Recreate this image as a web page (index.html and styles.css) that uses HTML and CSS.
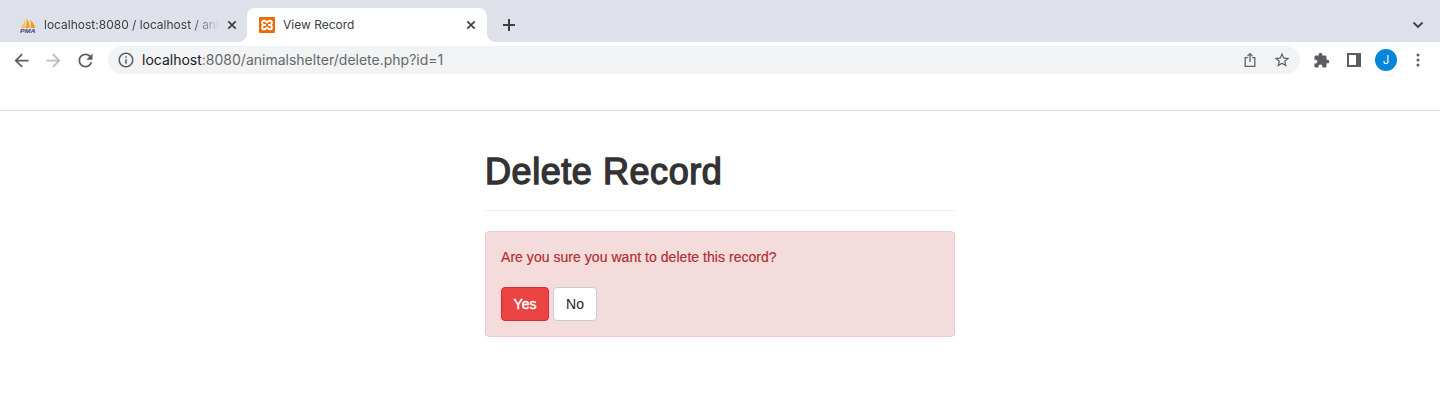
FILE: index.html
```html
<!DOCTYPE html>
<html lang="en">
<head>
<meta charset="utf-8">
<title>View Record</title>
<link rel="stylesheet" href="styles.css">
</head>
<body>
<header class="browser">
  <div class="tab-strip">
    <div class="tab tab-back">
      <svg class="favicon" viewBox="0 0 16 16">
        <path d="M5.3 1.5V11H.8C2.6 8.500 4.500 5 5.300 1.500z" fill="#fbbd69"/>
        <path d="M6.500 1C8.800 4 9.700 8 9.600 11H5.600C6.600 8 7 4 6.500 1z" fill="#f89c0e"/>
        <path d="M10.300 2.500C13 5.500 14.800 8.500 15.200 11H10.500C11.200 8.500 11.100 5 10.300 2.500z" fill="#f89c0e"/>
        <text x="0" y="15.500" class="pma" textLength="15.500" lengthAdjust="spacingAndGlyphs">PMA</text>
      </svg>
      <span class="tab-title fade">localhost:8080 / localhost / ani</span>
      <svg class="close" viewBox="0 0 10 10"><path d="M1.300 1.300l7.400 7.400M8.700 1.300L1.300 8.700"/></svg>
    </div>
    <div class="tab tab-active">
      <svg class="favicon" viewBox="0 0 16 16">
        <rect width="16" height="16" rx="1" fill="#ec6a08"/>
        <path d="M4.800 3.700h1.200l2 1.900 2-1.900h1.200a1.600 1.600 0 0 1 1.600 1.600v1.200L11.700 8l1.100 1.500v1.200a1.600 1.600 0 0 1-1.600 1.600H10L8 10.400l-2 1.900H4.800a1.600 1.600 0 0 1-1.600-1.600V9.500L4.300 8 3.200 6.500V5.300a1.600 1.600 0 0 1 1.600-1.600zM5 8h1.800M9.200 8H11" fill="none" stroke="#fff" stroke-width="1.900" stroke-linejoin="round"/>
      </svg>
      <span class="tab-title">View Record</span>
      <svg class="close" viewBox="0 0 10 10"><path d="M1.300 1.300l7.400 7.400M8.700 1.300L1.300 8.700"/></svg>
    </div>
    <svg class="new-tab" viewBox="0 0 12 12"><path d="M6 0v12M0 6h12"/></svg>
    <svg class="chevron" viewBox="0 0 12 8"><path d="M1.500 1.500L6 6l4.500-4.500"/></svg>
  </div>
  <div class="toolbar">
    <nav class="nav">
      <svg class="icon" viewBox="0 0 24 24"><path d="M20 11H7.830l5.590-5.590L12 4l-8 8 8 8 1.410-1.410L7.830 13H20v-2z"/></svg>
      <svg class="icon disabled" viewBox="0 0 24 24"><path d="M12 4l-1.410 1.410L16.170 11H4v2h12.170l-5.580 5.590L12 20l8-8z"/></svg>
      <svg class="icon" viewBox="0 0 24 24"><path d="M17.650 6.350C16.200 4.900 14.210 4 12 4c-4.420 0-7.990 3.580-7.990 8s3.570 8 7.990 8c3.730 0 6.840-2.550 7.730-6h-2.080c-.82 2.330-3.040 4-5.650 4-3.310 0-6-2.690-6-6s2.690-6 6-6c1.660 0 3.140.69 4.220 1.780L13 11h7V4l-2.350 2.350z"/></svg>
    </nav>
    <div class="omnibox">
      <svg class="info" viewBox="0 0 24 24"><path d="M11 17h2v-6h-2v6zm1-15C6.480 2 2 6.480 2 12s4.480 10 10 10 10-4.480 10-10S17.520 2 12 2zm0 18c-4.410 0-8-3.590-8-8s3.590-8 8-8 8 3.590 8 8-3.590 8-8 8zM11 9h2V7h-2v2z"/></svg>
      <span class="url"><span class="host">localhost</span>:8080/animalshelter/delete.php?id=1</span>
      <svg class="share" viewBox="0 0 12 16"><path d="M3.800 5.600H1.200v8.700h9.600V5.600H8.200M6 10V1.700M3.500 4.100L6 1.600l2.500 2.500"/></svg>
      <svg class="star" viewBox="0 0 24 24"><path d="M22 9.240l-7.190-.62L12 2 9.190 8.630 2 9.240l5.460 4.730L5.820 21 12 17.270 18.180 21l-1.630-7.030L22 9.240zM12 15.400l-3.760 2.270 1-4.280-3.320-2.880 4.380-.38L12 6.100l1.710 4.040 4.380.38-3.320 2.880 1 4.280L12 15.400z"/></svg>
    </div>
    <svg class="puzzle" viewBox="0 0 24 24"><path d="M20.500 11H19V7c0-1.100-.9-2-2-2h-4V3.500C13 2.120 11.880 1 10.500 1S8 2.120 8 3.500V5H4c-1.100 0-1.990.9-1.990 2v3.800H3.500c1.490 0 2.700 1.210 2.700 2.700s-1.210 2.700-2.700 2.700H2V20c0 1.100.9 2 2 2h3.800v-1.500c0-1.490 1.210-2.700 2.700-2.700 1.490 0 2.700 1.210 2.700 2.700V22H17c1.100 0 2-.9 2-2v-4h1.500c1.380 0 2.500-1.120 2.500-2.500S21.880 11 20.500 11z"/></svg>
    <svg class="panel" viewBox="0 0 14 14"><path d="M0 0h14v14H0zM2 2v10h7V2z" fill-rule="evenodd"/></svg>
    <span class="avatar">J</span>
    <svg class="menu" viewBox="0 0 4 14"><circle cx="2" cy="2" r="1.500"/><circle cx="2" cy="7" r="1.500"/><circle cx="2" cy="12" r="1.500"/></svg>
  </div>
  <div class="bookmarks"></div>
</header>
<main class="wrapper">
  <h1 class="title">Delete Record</h1>
  <form class="alert">
    <p class="question">Are you sure you want to delete this record?</p>
    <div class="actions">
      <button class="btn btn-danger" type="button">Yes</button>
      <button class="btn btn-default" type="button">No</button>
    </div>
  </form>
</main>
</body>
</html>
```

FILE: styles.css
```css
* { box-sizing: border-box; }
body {
  margin: 0;
  background: #fff;
  font-family: "Liberation Sans", Arial, sans-serif;
  overflow: hidden;
}
svg { display: block; flex: none; }

.browser { border-bottom: 1px solid #d9dadb; }
.tab-strip {
  display: flex;
  height: 42px;
  padding-top: 8px;
  background: #dee1e9;
}
.tab {
  display: flex;
  align-items: center;
  height: 34px;
  font: 12px Inter, sans-serif;
  color: #3c4043;
}
.tab-back { width: 247px; padding: 0 10px 0 20px; }
.tab-active {
  position: relative;
  width: 240px;
  padding: 0 11px 0 12px;
  background: #fff;
  border-radius: 8px 8px 0 0;
}
.tab-active::before,
.tab-active::after {
  content: "";
  position: absolute;
  bottom: 0;
  width: 8px;
  height: 8px;
}
.tab-active::before { left: -8px; background: radial-gradient(circle at 0 0, transparent 7.500px, #fff 8px); }
.tab-active::after { right: -8px; background: radial-gradient(circle at 100% 0, transparent 7.500px, #fff 8px); }
.favicon { width: 16px; height: 16px; margin-right: 8px; }
.pma { font: italic bold 6px "Liberation Sans", sans-serif; fill: #44427e; }
.tab-title {
  flex: 1;
  padding-bottom: 2px;
  white-space: nowrap;
}
.fade {
  flex: none;
  width: 176px;
  margin-right: 7px;
  -webkit-mask-image: linear-gradient(to right, #000 148px, transparent 176px);
  mask-image: linear-gradient(to right, #000 148px, transparent 176px);
}
.close { width: 10px; height: 10px; fill: none; stroke: #3c4043; stroke-width: 1.700; }
.new-tab {
  width: 12px;
  height: 12px;
  margin: 11px 0 0 16px;
  stroke: #3c4043;
  stroke-width: 2;
}
.chevron {
  width: 12px;
  height: 8px;
  margin: 13px 16px 0 auto;
  fill: none;
  stroke: #3c4043;
  stroke-width: 1.800;
}

.toolbar {
  display: flex;
  align-items: center;
  height: 36px;
  padding: 0 20px 0 11px;
  fill: #5a5e63;
}
.nav { display: flex; gap: 11px; width: 97px; }
.icon { width: 21px; height: 21px; }
.disabled { fill: #babcbe; }
.omnibox {
  display: flex;
  align-items: center;
  width: 1192px;
  height: 28px;
  padding: 0 9px;
  border-radius: 14px;
  background: #f1f3f4;
}
.info { width: 18px; height: 18px; margin-right: 7px; }
.url {
  flex: 1;
  padding-bottom: 2px;
  font: 14px Inter, sans-serif;
  color: #66686b;
}
.host { color: #202124; }
.share {
  width: 12px;
  height: 16px;
  margin-right: 17px;
  fill: none;
  stroke: #5f6368;
  stroke-width: 1.300;
}
.star { width: 18px; height: 18px; }
.puzzle { width: 17px; height: 17px; margin-left: 13px; }
.panel { width: 14px; height: 14px; margin-left: 17px; }
.avatar {
  width: 22px;
  height: 22px;
  margin-left: 14px;
  border-radius: 50%;
  background: #0585db;
  color: #fff;
  font: 11.5px/23px Inter, sans-serif;
  text-align: center;
}
.menu { width: 4px; height: 14px; margin-left: 19px; }
.bookmarks { height: 32px; }

.wrapper { width: 470px; margin: 40px auto 0; }
.title {
  height: 60px;
  margin: 0 0 20px;
  padding-top: 1px;
  border-bottom: 1px solid #eee;
  font-size: 36px;
  font-weight: 400;
  line-height: 40px;
  letter-spacing: .56px;
  color: #333;
  -webkit-text-stroke: 1.400px #333;
}
.alert {
  padding: 15px;
  border: 1px solid #edc9d0;
  border-radius: 4px;
  background: #f4dcdd;
}
.question {
  margin: 0 0 20px;
  font-size: 14px;
  line-height: 20px;
  letter-spacing: .04px;
  color: #b13031;
  -webkit-text-stroke: .2px #b13031;
}
.actions { display: flex; gap: 4px; }
.btn {
  height: 34px;
  padding: 0;
  border: 1px solid;
  border-radius: 4px;
  font: 14px/20px "Liberation Sans", Arial, sans-serif;
}
.btn-danger {
  width: 48px;
  border-color: #e22828;
  background: #e94442;
  color: #fff;
  -webkit-text-stroke: .4px #fff;
}
.btn-default {
  width: 44px;
  border-color: #ccc;
  background: #fff;
  color: #222;
}
```
